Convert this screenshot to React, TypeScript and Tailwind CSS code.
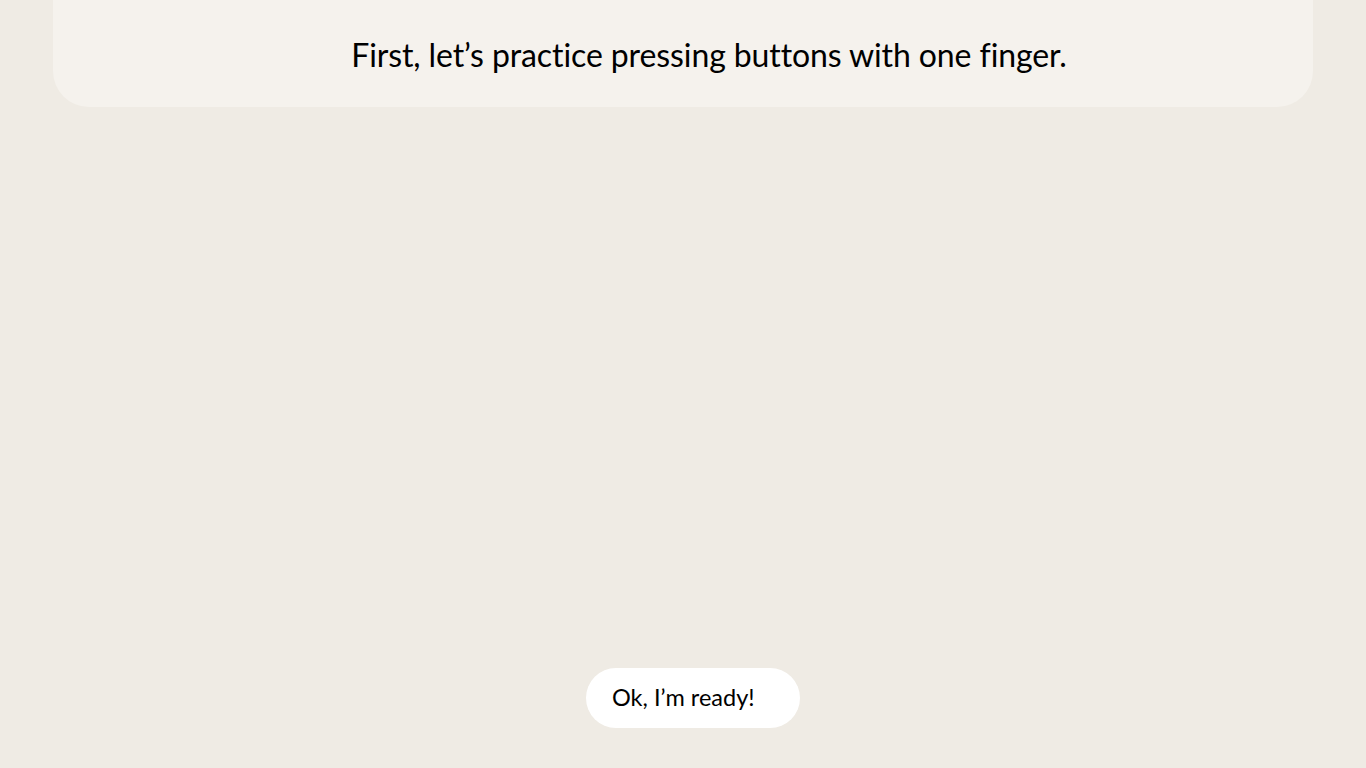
export default function App() {
  return (
    <div className="min-h-screen h-screen bg-[#efebe4] flex flex-col items-center font-['Lato',sans-serif] text-black">
      <div className="w-[1260px] h-[107px] bg-[#f5f2ed] rounded-b-[36px] flex items-end justify-center pl-[52px] pb-[36px]">
        <p className="text-[32px] leading-none tracking-[-0.1px]">First, let’s practice pressing buttons with one finger.</p>
      </div>
      <div className="flex-1" />
      <button className="mb-[40px] ml-[20px] h-[60px] w-[214px] rounded-full bg-white flex items-center pl-[26px] text-[23.5px]">
        Ok, I’m ready!
      </button>
    </div>
  )
}
